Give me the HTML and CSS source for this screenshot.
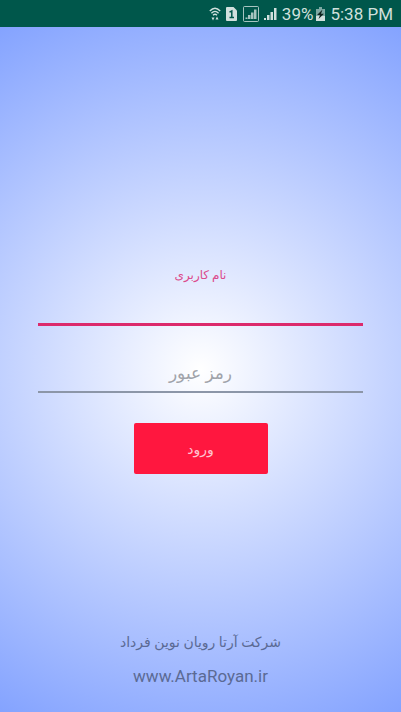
FILE: index.html
```
<!DOCTYPE html>
<html lang="fa" dir="rtl">
<head>
    <meta charset="UTF-8">
    <meta name="viewport" content="width=device-width, initial-scale=1.0">
    <title>ورود</title>
    <link rel="stylesheet" href="styles.css">
</head>
<body>

    <!-- Status Bar -->
    <header class="status-bar" dir="ltr">
        <svg class="icon-wifi" width="12" height="14" viewBox="0 0 12 14" fill="none" stroke="currentColor">
            <path d="M0.800 4Q6 -1.500 11.200 4M2.400 6.200Q6 2.500 9.600 6.200M4 8.200Q6 6.200 8 8.200" stroke-width="1.300"/>
            <path d="M2.500 10.500H5.500L4 13.500ZM6.500 12.500H9.500L8 9.500Z" fill="currentColor" stroke="none"/>
        </svg>
        <svg class="icon-sim" width="11" height="14" viewBox="0 0 11 14">
            <path d="M1 0H7.500L11 3.500V13Q11 14 10 14H1Q0 14 0 13V1Q0 0 1 0Z" fill="currentColor"/>
            <path d="M3.500 5.200L5.800 4V10.500M3.500 10.500H8" fill="none" stroke="#00574b" stroke-width="1.500"/>
        </svg>
        <svg class="icon-signal-box" width="16" height="16" viewBox="0 0 16 16">
            <rect x="0.500" y="0.500" width="15" height="15" rx="1" fill="none" stroke="currentColor" opacity="0.8"/>
            <path d="M2.500 11.500H4.500V13H2.500ZM5 9H7.500V13H5ZM8 6.500H10.500V13H8ZM11 3.500H13.500V13H11Z" fill="currentColor" opacity="0.8"/>
        </svg>
        <svg class="icon-signal" width="13" height="12" viewBox="0 0 13 12">
            <path d="M0 10H2V12H0ZM3 7H5.500V12H3ZM6.500 4H9V12H6.500ZM10 0H12.500V12H10Z" fill="currentColor"/>
        </svg>
        <span class="battery-level">39%</span>
        <svg class="icon-battery" width="9" height="14" viewBox="0 0 9 14">
            <path d="M3 0H6V2H9V14H0V2H3Z" fill="currentColor" opacity="0.6"/>
            <path d="M0 9H9V14H0Z" fill="currentColor"/>
            <path d="M6.500 2.500L1 8H4L2.500 12L8 6.800H5Z" fill="#10231f"/>
        </svg>
        <span class="clock">5:38 PM</span>
    </header>

    <main class="login">
        <form class="login-form">
            <div class="field active">
                <label for="username">نام کاربری</label>
                <input type="text" id="username">
            </div>
            <div class="field">
                <input type="password" id="password" placeholder="رمز عبور" aria-label="رمز عبور">
            </div>
            <button type="submit" class="login-button">ورود</button>
        </form>

        <!-- Company -->
        <footer class="company">
            <p>شرکت آرتا رویان نوین فرداد</p>
            <a href="http://www.ArtaRoyan.ir" dir="ltr">www.ArtaRoyan.ir</a>
        </footer>
    </main>

</body>
</html>
```
FILE: styles.css
```
/* Basic Reset */
* {
    margin: 0;
    padding: 0;
    box-sizing: border-box;
}

body {
    font-family: Roboto, 'DejaVu Sans', sans-serif;
    min-height: 100vh;
    display: flex;
    flex-direction: column;
}

/* Status Bar */
.status-bar {
    height: 27px;
    padding: 0 8px;
    display: flex;
    justify-content: flex-end;
    align-items: center;
    background: #00574b;
    color: #d0e0dd;
    font-size: 17px;
}

.icon-sim {
    margin-left: 5px;
}

.icon-signal-box {
    margin-left: 6px;
}

.icon-signal,
.battery-level,
.clock {
    margin-left: 5px;
}

.icon-battery {
    margin-left: 3px;
}

/* Login */
.login {
    flex: 1;
    padding: 236px 38px 24px;
    display: flex;
    flex-direction: column;
    justify-content: space-between;
    background: radial-gradient(circle, #ffffff, #84a3ff);
}

.login-form {
    display: flex;
    flex-direction: column;
    align-items: center;
}

.field {
    width: 100%;
    text-align: center;
}

.field label {
    display: block;
    height: 24px;
    line-height: 24px;
    font-size: 12px;
    font-weight: 500;
    color: #dc4a8c;
}

.field input {
    display: block;
    width: 100%;
    height: 39px;
    border: none;
    border-bottom: 2px solid #8c96a8;
    outline: none;
    background: transparent;
    font-family: inherit;
    font-size: 17px;
    color: #333;
    text-align: center;
}

.field.active input {
    border-bottom: 3px solid #dc2a6c;
}

.field + .field {
    margin-top: 28px;
}

.field input::placeholder {
    color: #a0a3aa;
    opacity: 1;
}

.login-button {
    width: 134px;
    height: 51px;
    margin-top: 30px;
    border: none;
    border-radius: 2px;
    background: #ff173f;
    color: #ffc4d0;
    font-family: inherit;
    font-size: 14px;
    cursor: pointer;
}

/* Company */
.company {
    display: flex;
    flex-direction: column;
    align-items: center;
    gap: 10px;
    font-size: 14px;
    line-height: 24px;
    color: #5b6a94;
}

.company a {
    color: inherit;
    text-decoration: none;
    font-size: 17px;
}
```
